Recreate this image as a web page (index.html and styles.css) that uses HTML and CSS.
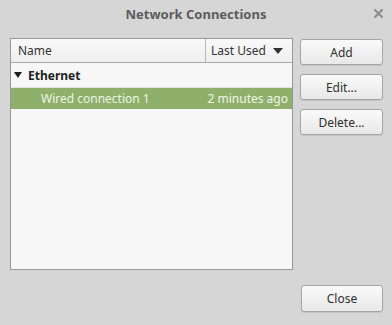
FILE: index.html
```html
<!DOCTYPE html>
<html>
<head>
<meta charset="utf-8">
<link rel="stylesheet" href="styles.css">
</head>
<body>
<div class="window">
  <div class="titlebar">
    <span class="title">Network Connections</span>
    <span class="close-x">
      <svg width="9" height="9" viewBox="0 0 9 9"><path d="M1.2 1.2 L7.8 7.8 M7.8 1.2 L1.2 7.8" stroke="#8e8e8e" stroke-width="2.2" stroke-linecap="square"/></svg>
    </span>
  </div>
  <div class="main">
    <div class="tree">
      <div class="tree-header">
        <div class="col-name">Name</div>
        <div class="col-used">Last Used <span class="sort-arrow"></span></div>
      </div>
      <div class="row group">
        <span class="expander"></span><span class="group-label">Ethernet</span>
      </div>
      <div class="row selected">
        <span class="conn-name">Wired connection 1</span>
        <span class="conn-used">2 minutes ago</span>
      </div>
    </div>
    <div class="buttons">
      <button class="btn">Add</button>
      <button class="btn">Edit...</button>
      <button class="btn">Delete...</button>
    </div>
  </div>
  <div class="footer">
    <button class="btn close-btn">Close</button>
  </div>
</div>
</body>
</html>
```

FILE: styles.css
```css
html, body {
  margin: 0;
  padding: 0;
  background: #d6d6d6;
}
.window {
  width: 392px;
  height: 325px;
  font-family: "Noto Sans", "Open Sans", sans-serif;
  font-size: 12px;
  color: #333;
  display: flex;
  flex-direction: column;
}
.titlebar {
  height: 30px;
  position: relative;
  display: flex;
  align-items: center;
  justify-content: center;
}
.title {
  font-weight: bold;
  font-size: 13px;
  color: #5c5c5c;
  margin-top: -2px;
}
.close-x {
  position: absolute;
  right: 9px;
  top: 9px;
  width: 9px;
  height: 9px;
  display: block;
}
.close-x svg { display: block; }
.main {
  display: flex;
  padding: 8px 9px 0 10px;
  gap: 7px;
}
.tree {
  width: 281px;
  height: 230px;
  border: 1px solid #979797;
  background: #f7f7f7;
  display: flex;
  flex-direction: column;
}
.tree-header {
  display: flex;
  height: 23px;
  border-bottom: 1px solid #a8a8a8;
  background: linear-gradient(#f9f9f9, #efefef);
}
.col-name {
  flex: 1;
  padding-left: 7px;
  line-height: 23px;
  border-right: 1px solid #b8b8b8;
}
.col-used {
  width: 81px;
  padding-left: 5px;
  line-height: 23px;
  display: flex;
  align-items: center;
}
.sort-arrow {
  display: inline-block;
  width: 0;
  height: 0;
  border-left: 5px solid transparent;
  border-right: 5px solid transparent;
  border-top: 6px solid #333;
  margin-left: 7px;
}
.row {
  display: flex;
  align-items: center;
}
.group {
  height: 24px;
  border-bottom: 1px solid #e2e2e2;
}
.expander {
  width: 0;
  height: 0;
  border-left: 4.5px solid transparent;
  border-right: 4.5px solid transparent;
  border-top: 6px solid #1e1e1e;
  margin-left: 3px;
  margin-right: 6px;
}
.group-label {
  font-weight: bold;
  color: #222;
}
.selected {
  height: 21px;
  background: #8fb06a;
  color: #eef4e6;
  justify-content: space-between;
  padding: 0 4px 0 30px;
}
.buttons {
  display: flex;
  flex-direction: column;
  gap: 9px;
  padding-top: 1px;
}
.btn {
  width: 83px;
  height: 26px;
  border: 1px solid #a5a5a5;
  border-radius: 3px;
  background: linear-gradient(#fafafa, #e8e8e8);
  font-family: "Noto Sans", "Open Sans", sans-serif;
  font-size: 12px;
  color: #2e2e2e;
  padding: 0;
  box-shadow: 0 1px 0 rgba(0,0,0,0.08);
}
.footer {
  display: flex;
  justify-content: flex-end;
  padding: 15px 9px 0 0;
}
.close-btn {
  width: 82px;
  height: 27px;
}
```
